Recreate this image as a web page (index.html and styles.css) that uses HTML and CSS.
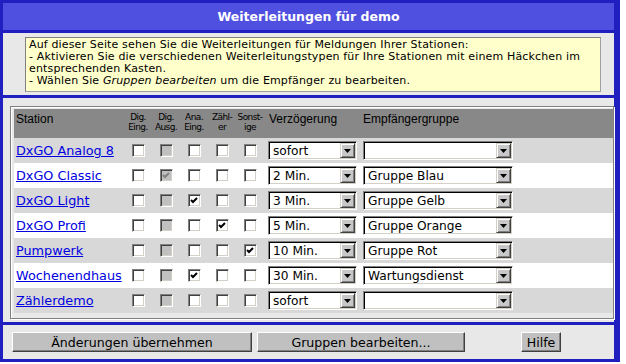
FILE: index.html
```html
<!DOCTYPE html>
<html lang="de">
<head>
    <meta charset="UTF-8">
    <title>Weiterleitungen für demo</title>
    <link rel="stylesheet" href="styles.css">
</head>
<body>
    <div class="panel">
        <div class="title">Weiterleitungen für demo</div>

        <div class="section info-section">
            <div class="info">
                Auf dieser Seite sehen Sie die Weiterleitungen für Meldungen Ihrer Stationen:<br>
                - Aktivieren Sie die verschiedenen Weiterleitungstypen für Ihre Stationen mit einem Häckchen im entsprechenden Kasten.<br>
                - Wählen Sie <i>Gruppen bearbeiten</i> um die Empfänger zu bearbeiten.
            </div>
        </div>

        <div class="section table-section">
            <div class="frame">
                <div class="row head">
                    <div class="h-big station">Station</div>
                    <div class="h-small">Dig.<br>Eing.</div>
                    <div class="h-small">Dig.<br>Ausg.</div>
                    <div class="h-small">Ana.<br>Eing.</div>
                    <div class="h-small">Zähl-<br>er</div>
                    <div class="h-small">Sonst-<br>ige</div>
                    <div class="h-big verz">Verzögerung</div>
                    <div class="h-big empf">Empfängergruppe</div>
                    <div></div>
                </div>

                <div class="row alt">
                    <div class="station"><a href="#">DxGO Analog 8</a></div>
                    <div class="c"><span class="cb"></span></div>
                    <div class="c"><span class="cb off"></span></div>
                    <div class="c"><span class="cb"></span></div>
                    <div class="c"><span class="cb"></span></div>
                    <div class="c"><span class="cb"></span></div>
                    <div class="verz"><span class="sel s1"><span class="val">sofort</span><span class="arr"><svg width="7" height="4" viewBox="0 0 7 4"><polygon points="0,0 7,0 3.5,4"/></svg></span></span></div>
                    <div class="empf"><span class="sel s2"><span class="val"></span><span class="arr"><svg width="7" height="4" viewBox="0 0 7 4"><polygon points="0,0 7,0 3.5,4"/></svg></span></span></div>
                    <div></div>
                </div>

                <div class="row">
                    <div class="station"><a href="#">DxGO Classic</a></div>
                    <div class="c"><span class="cb"></span></div>
                    <div class="c"><span class="cb off"><svg width="9" height="9" viewBox="0 0 9 9"><polyline points="1,4 3,6 7,2"/></svg></span></div>
                    <div class="c"><span class="cb"></span></div>
                    <div class="c"><span class="cb"></span></div>
                    <div class="c"><span class="cb"></span></div>
                    <div class="verz"><span class="sel s1"><span class="val">2 Min.</span><span class="arr"><svg width="7" height="4" viewBox="0 0 7 4"><polygon points="0,0 7,0 3.5,4"/></svg></span></span></div>
                    <div class="empf"><span class="sel s2"><span class="val">Gruppe Blau</span><span class="arr"><svg width="7" height="4" viewBox="0 0 7 4"><polygon points="0,0 7,0 3.5,4"/></svg></span></span></div>
                    <div></div>
                </div>

                <div class="row alt">
                    <div class="station"><a href="#">DxGO Light</a></div>
                    <div class="c"><span class="cb"></span></div>
                    <div class="c"><span class="cb off"></span></div>
                    <div class="c"><span class="cb"><svg width="9" height="9" viewBox="0 0 9 9"><polyline points="1,4 3,6 7,2"/></svg></span></div>
                    <div class="c"><span class="cb"></span></div>
                    <div class="c"><span class="cb"></span></div>
                    <div class="verz"><span class="sel s1"><span class="val">3 Min.</span><span class="arr"><svg width="7" height="4" viewBox="0 0 7 4"><polygon points="0,0 7,0 3.5,4"/></svg></span></span></div>
                    <div class="empf"><span class="sel s2"><span class="val">Gruppe Gelb</span><span class="arr"><svg width="7" height="4" viewBox="0 0 7 4"><polygon points="0,0 7,0 3.5,4"/></svg></span></span></div>
                    <div></div>
                </div>

                <div class="row">
                    <div class="station"><a href="#">DxGO Profi</a></div>
                    <div class="c"><span class="cb"></span></div>
                    <div class="c"><span class="cb off"></span></div>
                    <div class="c"><span class="cb"></span></div>
                    <div class="c"><span class="cb"><svg width="9" height="9" viewBox="0 0 9 9"><polyline points="1,4 3,6 7,2"/></svg></span></div>
                    <div class="c"><span class="cb"></span></div>
                    <div class="verz"><span class="sel s1"><span class="val">5 Min.</span><span class="arr"><svg width="7" height="4" viewBox="0 0 7 4"><polygon points="0,0 7,0 3.5,4"/></svg></span></span></div>
                    <div class="empf"><span class="sel s2"><span class="val">Gruppe Orange</span><span class="arr"><svg width="7" height="4" viewBox="0 0 7 4"><polygon points="0,0 7,0 3.5,4"/></svg></span></span></div>
                    <div></div>
                </div>

                <div class="row alt">
                    <div class="station"><a href="#">Pumpwerk</a></div>
                    <div class="c"><span class="cb"></span></div>
                    <div class="c"><span class="cb off"></span></div>
                    <div class="c"><span class="cb"></span></div>
                    <div class="c"><span class="cb"></span></div>
                    <div class="c"><span class="cb"><svg width="9" height="9" viewBox="0 0 9 9"><polyline points="1,4 3,6 7,2"/></svg></span></div>
                    <div class="verz"><span class="sel s1"><span class="val">10 Min.</span><span class="arr"><svg width="7" height="4" viewBox="0 0 7 4"><polygon points="0,0 7,0 3.5,4"/></svg></span></span></div>
                    <div class="empf"><span class="sel s2"><span class="val">Gruppe Rot</span><span class="arr"><svg width="7" height="4" viewBox="0 0 7 4"><polygon points="0,0 7,0 3.5,4"/></svg></span></span></div>
                    <div></div>
                </div>

                <div class="row">
                    <div class="station"><a href="#">Wochenendhaus</a></div>
                    <div class="c"><span class="cb"></span></div>
                    <div class="c"><span class="cb off"></span></div>
                    <div class="c"><span class="cb"><svg width="9" height="9" viewBox="0 0 9 9"><polyline points="1,4 3,6 7,2"/></svg></span></div>
                    <div class="c"><span class="cb"></span></div>
                    <div class="c"><span class="cb"></span></div>
                    <div class="verz"><span class="sel s1"><span class="val">30 Min.</span><span class="arr"><svg width="7" height="4" viewBox="0 0 7 4"><polygon points="0,0 7,0 3.5,4"/></svg></span></span></div>
                    <div class="empf"><span class="sel s2"><span class="val">Wartungsdienst</span><span class="arr"><svg width="7" height="4" viewBox="0 0 7 4"><polygon points="0,0 7,0 3.5,4"/></svg></span></span></div>
                    <div></div>
                </div>

                <div class="row alt">
                    <div class="station"><a href="#">Zählerdemo</a></div>
                    <div class="c"><span class="cb"></span></div>
                    <div class="c"><span class="cb off"></span></div>
                    <div class="c"><span class="cb"></span></div>
                    <div class="c"><span class="cb"></span></div>
                    <div class="c"><span class="cb"></span></div>
                    <div class="verz"><span class="sel s1"><span class="val">sofort</span><span class="arr"><svg width="7" height="4" viewBox="0 0 7 4"><polygon points="0,0 7,0 3.5,4"/></svg></span></span></div>
                    <div class="empf"><span class="sel s2"><span class="val"></span><span class="arr"><svg width="7" height="4" viewBox="0 0 7 4"><polygon points="0,0 7,0 3.5,4"/></svg></span></span></div>
                    <div></div>
                </div>
            </div>
        </div>

        <div class="section buttons">
            <button class="btn b-save">Änderungen übernehmen</button>
            <button class="btn b-groups">Gruppen bearbeiten...</button>
            <button class="btn b-help">Hilfe</button>
        </div>
    </div>
</body>
</html>
```

FILE: styles.css
```css
* {
    box-sizing: border-box;
}

body {
    margin: 0;
    background: #fff;
    color: #000;
    font-family: "DejaVu Sans", Verdana, sans-serif;
    font-size: 12px;
}

.panel {
    width: 620px;
    border: 3px solid #2020c0;
    border-right-width: 6px;
    background: #e8e8e8;
}

.title {
    height: 27px;
    display: flex;
    align-items: center;
    justify-content: center;
    background: #5050e0;
    color: #fff;
    font-weight: bold;
    font-size: 12.5px;
}

.section {
    border-top: 3px solid #2020c0;
}

/* info box */
.info-section {
    height: 65px;
    padding: 4px 0 0 22px;
}

.info {
    width: 576px;
    height: 55px;
    padding: 1px 3px;
    background: #ffffcc;
    border: 1px solid #808080;
    border-right-color: #a0a0a0;
    border-bottom-color: #a0a0a0;
    font-size: 11px;
    line-height: 12px;
    letter-spacing: 0.15px;
}

/* table */
.table-section {
    height: 227px;
    padding: 8px 0 0 7px;
}

.frame {
    height: 213px;
    padding: 2px 0 0 3px;
    border: 1px solid #808080;
    box-shadow: inset 1px 1px 0 #fff, 1px 1px 0 #fff;
}

.row {
    display: grid;
    grid-template-columns: 110px repeat(5, 28px) 96px 155px 1fr;
    height: 25px;
    align-items: center;
    background: #fff;
}

.row.alt {
    background: #d8d8d8;
}

.row.head {
    height: 29px;
    align-items: start;
    background: #888;
}

.station {
    padding-left: 2px;
}

.h-big {
    padding-top: 3px;
    font-family: "Liberation Sans", Arial, sans-serif;
    font-size: 12px;
}

.h-big.verz {
    padding-left: 5px;
}

.h-big.empf {
    padding-left: 3px;
}

.h-small {
    padding-top: 3px;
    text-align: center;
    white-space: nowrap;
    font-size: 9px;
    line-height: 10px;
    letter-spacing: -0.6px;
}

a {
    color: #0000e0;
    text-decoration: underline;
    font-size: 12.8px;
}

/* checkboxes */
.c {
    display: flex;
    justify-content: center;
}

.cb {
    width: 13px;
    height: 13px;
    display: flex;
    align-items: center;
    justify-content: center;
    background: #fff;
    border: 1px solid;
    border-color: #808080 #fff #fff #808080;
    box-shadow: inset 1px 1px 0 #404040, inset -1px -1px 0 #d4d0c8;
}

.cb.off {
    background: #c0c0c0;
}

.cb svg {
    fill: none;
    stroke: #000;
    stroke-width: 2;
}

.cb.off svg {
    stroke: #808080;
}

/* selects */
.verz .sel {
    margin-left: 4px;
}

.empf .sel {
    margin-left: 3px;
}

.sel {
    display: flex;
    align-items: center;
    height: 19px;
    background: #fff;
    border: 1px solid;
    border-color: #808080 #fff #fff #808080;
    box-shadow: inset 1px 1px 0 #000, inset -1px -1px 0 #d4d0c8;
}

.s1 {
    width: 89px;
}

.s2 {
    width: 150px;
}

.val {
    flex: 1;
    padding-left: 4px;
    white-space: nowrap;
    overflow: hidden;
    font-size: 12.2px;
}

.arr {
    width: 15px;
    height: 15px;
    margin-right: 1px;
    display: flex;
    align-items: center;
    justify-content: center;
    background: #c8c8c8;
    border: 1px solid;
    border-color: #d4d0c8 #404040 #404040 #d4d0c8;
    box-shadow: inset 1px 1px 0 #fff, inset -1px -1px 0 #808080;
}

.arr svg {
    fill: #000;
}

/* buttons */
.buttons {
    height: 37px;
    display: flex;
    align-items: flex-start;
    gap: 5px;
    padding: 7px 0 0 9px;
}

.btn {
    height: 20px;
    padding: 0;
    background: #c0c0c0;
    border: 1px solid;
    border-color: #fff #404040 #404040 #fff;
    box-shadow: inset -1px -1px 0 #808080;
    font-family: "DejaVu Sans", Verdana, sans-serif;
    font-size: 12.6px;
    color: #000;
}

.b-save {
    width: 240px;
}

.b-groups {
    width: 208px;
}

.b-help {
    width: 40px;
    margin-left: 51px;
}
```
